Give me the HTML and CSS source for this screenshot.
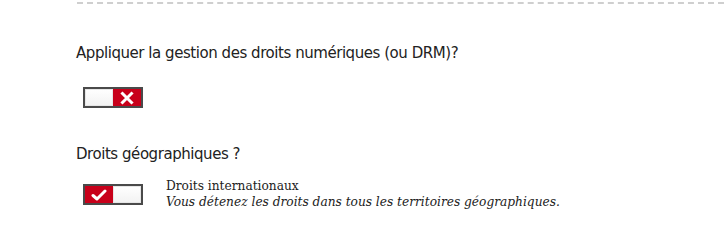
FILE: index.html
```html
<!DOCTYPE html>
<html lang="fr">
<head>
<meta charset="utf-8">
<link rel="stylesheet" href="styles.css">
</head>
<body>
<div class="page">
  <div class="sep"></div>
  <section class="field field-drm">
    <h3 class="label">Appliquer la gestion des droits numériques (ou DRM)?</h3>
    <div class="toggle off">
      <span class="half blank"></span>
      <span class="half red">
        <svg width="14" height="14" viewBox="0 0 14 14"><path d="M2.5 2.5 L11.5 11.5 M11.5 2.5 L2.5 11.5" stroke="#fff" stroke-width="3" stroke-linecap="square"/></svg>
      </span>
    </div>
  </section>
  <section class="field field-geo">
    <h3 class="label">Droits géographiques ?</h3>
    <div class="row">
      <div class="toggle on">
        <span class="half red">
          <svg width="16" height="14" viewBox="0 0 16 14"><path d="M2 7.5 L6 11 L14 3" stroke="#fff" stroke-width="3" fill="none" stroke-linecap="round" stroke-linejoin="round"/></svg>
        </span>
        <span class="half blank"></span>
      </div>
      <div class="desc">
        <div class="desc-title">Droits internationaux</div>
        <div class="desc-text">Vous détenez les droits dans tous les territoires géographiques.</div>
      </div>
    </div>
  </section>
</div>
</body>
</html>
```
FILE: styles.css
```css
html, body { margin: 0; padding: 0; background: #fff; }
.page { padding: 0 2px 0 77px; }
.sep { border-top: 2px dashed #cfcfcf; height: 0; margin-top: 2px; }
.label {
  font-family: "DejaVu Sans", Verdana, sans-serif;
  font-weight: normal;
  font-size: 15px;
  line-height: 18px;
  letter-spacing: -0.45px;
  color: #222;
  margin: 0 0 0 -1px;
}
.field-drm { padding-top: 40px; }
.field-drm .label { margin-bottom: 25px; }
.field-geo { padding-top: 37px; }
.field-geo .label { margin-bottom: 21px; }
.toggle {
  display: flex;
  width: 56px;
  height: 17px;
  border: 2px solid #4a4a4a;
  margin-left: 6px;
  flex: none;
}
.half { flex: 1; display: flex; align-items: center; justify-content: center; }
.blank { background: linear-gradient(#fff, #f2f2f2); box-shadow: inset 0 0 0 1px #e6e6e6; }
.red { background: #c8001a; }
.row { display: flex; align-items: flex-start; }
.desc {
  margin-left: 23px;
  margin-top: -6px;
  font-family: "DejaVu Serif", Georgia, serif;
  font-size: 12.2px;
  color: #222;
  line-height: 16px;
}
.desc-text { font-style: italic; }
```
